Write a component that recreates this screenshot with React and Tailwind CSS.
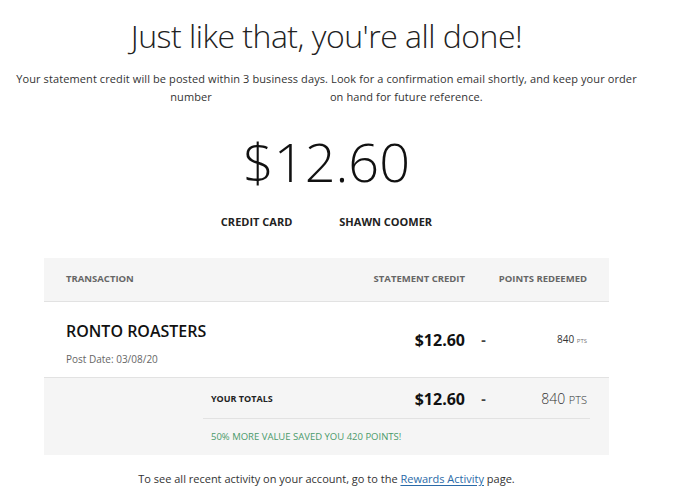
import React from 'react';

const font = { fontFamily: '"Open Sans", "Liberation Sans", sans-serif' };

function App() {
  return (
    <div className="w-[696px] h-[502px] bg-white overflow-hidden" style={font}>
      <div className="w-[653px] flex flex-col items-center">
        <h1 className="mt-[14px] text-[32px] leading-[44px] font-light text-[#222] tracking-[-0.5px]">
          Just like that, you're all done!
        </h1>
        <p className="mt-[12px] w-[648px] text-center text-[11px] leading-[18px] text-[#333] tracking-[0.1px]">
          Your statement credit will be posted within 3 business days. Look for a confirmation email shortly, and keep your order
          number<span className="mr-[118px]"></span>on hand for future reference.
        </p>
        <div className="mt-[23px] text-[54px] leading-[64px] font-light text-[#111]">$12.60</div>
        <div className="mt-[21px] flex gap-[47px] text-[11px] font-bold text-[#222]">
          <span>CREDIT CARD</span>
          <span>SHAWN COOMER</span>
        </div>

        <div className="mt-[27px] w-[565px] ml-[44px] self-start">
          <div className="flex items-center h-[44px] bg-[#f5f5f5] border-b border-[#e2e2e2] text-[9.5px] font-bold text-[#666] pr-[22px]">
            <div className="flex-1 pl-[22px]">TRANSACTION</div>
            <div className="w-[120px] text-right">STATEMENT CREDIT</div>
            <div className="w-[122px] text-right">POINTS REDEEMED</div>
          </div>
          <div className="flex items-center h-[76px] border-b border-[#e2e2e2] pr-[22px]">
            <div className="flex-1 pl-[22px] pt-[8px]">
              <div className="text-[16px] leading-[22px] font-semibold text-[#111]">RONTO ROASTERS</div>
              <div className="mt-[10px] text-[10px] text-[#666]">Post Date: 03/08/20</div>
            </div>
            <div className="w-[120px] text-right text-[16px] font-bold text-[#111] mt-[2px]">$12.60</div>
            <div className="w-[37px] text-center text-[14px] font-bold text-[#444]">-</div>
            <div className="w-[85px] text-right text-[10px] text-[#333]">
              840 <span className="text-[6px] text-[#777]">PTS</span>
            </div>
          </div>
          <div className="bg-[#f5f5f5] h-[77px] flex">
            <div className="w-[159px]"></div>
            <div className="flex-1 pr-[19px]">
              <div className="flex items-center h-[41px] pt-[2px] border-b border-[#e2e2e2] pr-[3px]">
                <div className="flex-1 pl-[8px] text-[9px] font-bold text-[#222]">YOUR TOTALS</div>
                <div className="text-right text-[16px] font-bold text-[#111]">$12.60</div>
                <div className="w-[37px] text-center text-[14px] font-bold text-[#444]">-</div>
                <div className="w-[85px] text-right text-[14px] font-light text-[#333]">
                  840 <span className="text-[11px]">PTS</span>
                </div>
              </div>
              <div className="pl-[8px] pt-[11px] text-[9.5px] text-[#4a9a6a]">50% MORE VALUE SAVED YOU 420 POINTS!</div>
            </div>
          </div>
        </div>

        <p className="mt-[16px] text-[11px] text-[#333]">
          To see all recent activity on your account, go to the{' '}
          <a href="#" className="text-[#2a6aa8] underline underline-offset-2">Rewards Activity</a> page.
        </p>
      </div>
    </div>
  );
}

export default App;
